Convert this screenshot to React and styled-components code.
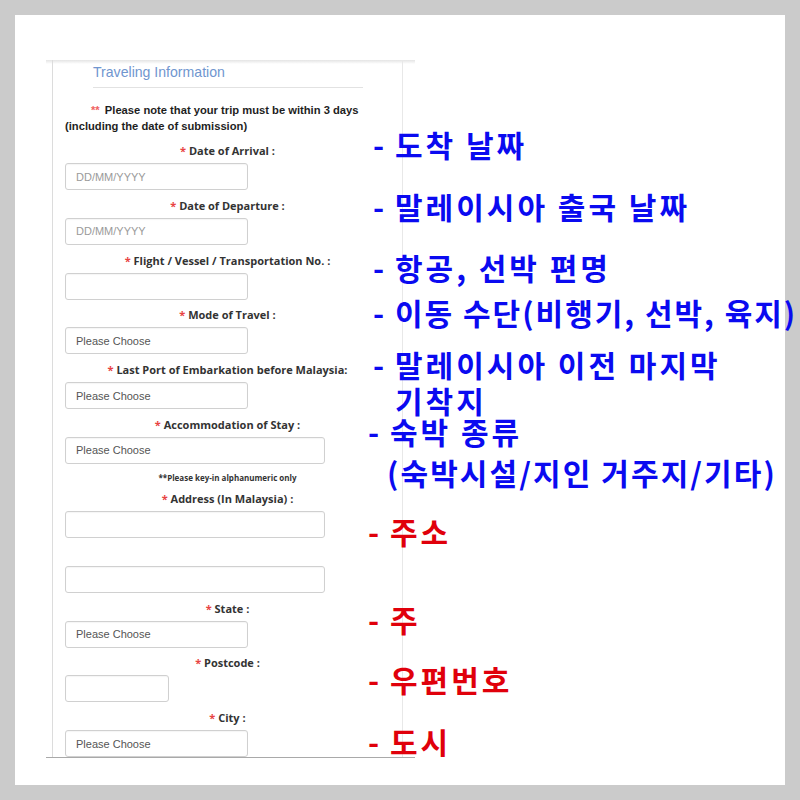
import React from "react";
import styled, { createGlobalStyle } from "styled-components";

const Global = createGlobalStyle`
  html, body { margin: 0; padding: 0; background: #cbcbcb; }
  body { width: 800px; height: 800px; overflow: hidden; }
  * { box-sizing: border-box; }
`;

const Frame = styled.div`
  margin: 15px;
  width: 770px;
  height: 770px;
  background: #fff;
  display: flex;
  align-items: flex-start;
`;

/* captured form */
const Shot = styled.div`
  margin: 45px 0 0 31px;
  width: 369px;
  height: 698px;
  flex-shrink: 0;
  overflow: hidden;
  border-bottom: 1px solid #a9a9a9;
  background: linear-gradient(#e4e4e4, #fff 4px);
`;

const Panel = styled.section`
  margin-left: 6px;
  width: 351px;
  min-height: 100%;
  padding-top: 2px;
  border-left: 1px solid #dcdcdc;
  border-right: 1px solid #e8e8e8;
`;

const Heading = styled.h3`
  margin: 0 0 0 40px;
  font: 400 14.1px/20px "Liberation Sans", Arial, sans-serif;
  color: #7096cf;
`;

const Rule = styled.hr`
  margin: 5px 0 0 40px;
  width: 270px;
  border: 0;
  border-top: 1px solid #e2e2e2;
`;

const Notice = styled.p`
  margin: 14px 0 0 12px;
  font: 700 11.2px/16px "Liberation Sans", Arial, sans-serif;
  color: #1e1e1e;
  text-indent: 26px;
`;

const Stars = styled.span`
  color: #f06262;
  margin-right: 2px;
`;

const Group = styled.div`
  margin-top: ${(p) => p.$top || 0}px;
  margin-bottom: 7.8px;
`;

const Label = styled.div`
  font: 700 11px/16px "Open Sans", sans-serif;
  color: #333;
  text-align: center;
  margin-bottom: 4px;
`;

const Req = styled.span`
  color: #e84343;
`;

const Hint = styled.div`
  margin-top: 3px;
  font: 700 8px/12px "Open Sans", sans-serif;
  color: #333;
  text-align: center;
`;

const Box = styled.input`
  display: block;
  margin: ${(p) => p.$top || 0}px 0 0 12px;
  width: ${(p) => p.$w}px;
  height: 27px;
  padding: 0 10px;
  border: 1px solid #d0d0d0;
  border-radius: 3px;
  background: #fff;
  box-shadow: inset 0 1px 1px rgba(0, 0, 0, 0.04);
  font: 400 11px "Liberation Sans", Arial, sans-serif;
  color: #555;
  outline: none;
  &::placeholder { color: #9a9a9a; }
`;

/* Korean callouts */
const Notes = styled.div`
  display: flex;
  flex-direction: column;
  margin-left: -47px;
  padding-top: 110.5px;
`;

const Note = styled.div`
  display: flex;
  margin-top: ${(p) => p.$gap}px;
  margin-left: ${(p) => p.$indent || 0}px;
  font: 700 30px/36px "Noto Sans CJK KR", sans-serif;
  letter-spacing: ${(p) => p.$spacing ?? 3}px;
  color: ${(p) => (p.$tone === "red" ? "#e0000b" : "#0a0af0")};
  white-space: nowrap;
`;

const Dash = styled.span`
  width: 22px;
  flex-shrink: 0;
`;

const Field = ({ label, top, children }) => (
  <Group $top={top}>
    <Label>
      <Req>*</Req> {label}
    </Label>
    {children}
  </Group>
);

const choose = "Please Choose";

export default function App() {
  return (
    <>
      <Global />
      <Frame>
        <Shot>
          <Panel>
            <Heading>Traveling Information</Heading>
            <Rule />
            <Notice>
              <Stars>**</Stars> Please note that your trip must be within 3 days
              <br />
              (including the date of submission)
            </Notice>
            <Field label="Date of Arrival :" top={9}>
              <Box $w={183} placeholder="DD/MM/YYYY" readOnly />
            </Field>
            <Field label="Date of Departure :">
              <Box $w={183} placeholder="DD/MM/YYYY" readOnly />
            </Field>
            <Field label="Flight / Vessel / Transportation No. :">
              <Box $w={183} readOnly />
            </Field>
            <Field label="Mode of Travel :">
              <Box $w={183} value={choose} readOnly />
            </Field>
            <Field label="Last Port of Embarkation before Malaysia:">
              <Box $w={183} value={choose} readOnly />
            </Field>
            <Field label="Accommodation of Stay :">
              <Box $w={260} value={choose} readOnly />
            </Field>
            <Hint>**Please key-in alphanumeric only</Hint>
            <Field label="Address (In Malaysia) :" top={7}>
              <Box $w={260} readOnly />
              <Box $w={260} $top={28} readOnly />
            </Field>
            <Field label="State :">
              <Box $w={183} value={choose} readOnly />
            </Field>
            <Field label="Postcode :">
              <Box $w={104} readOnly />
            </Field>
            <Field label="City :">
              <Box $w={183} value={choose} readOnly />
            </Field>
          </Panel>
        </Shot>

        <Notes>
          <Note $gap={0} $indent={5}>
            <Dash>-</Dash>
            <span>도착 날짜</span>
          </Note>
          <Note $gap={26} $indent={5}>
            <Dash>-</Dash>
            <span>말레이시아 출국 날짜</span>
          </Note>
          <Note $gap={25} $indent={5}>
            <Dash>-</Dash>
            <span>항공, 선박 편명</span>
          </Note>
          <Note $gap={9} $indent={5} $spacing={2}>
            <Dash>-</Dash>
            <span>이동 수단(비행기, 선박, 육지)</span>
          </Note>
          <Note $gap={16} $indent={5}>
            <Dash>-</Dash>
            <span>
              말레이시아 이전 마지막
              <br />
              기착지
            </span>
          </Note>
          <Note $gap={-5}>
            <Dash>-</Dash>
            <span>숙박 종류</span>
          </Note>
          <Note $gap={5} $indent={19} $spacing={2.1}>
            <span>(숙박시설/지인 거주지/기타)</span>
          </Note>
          <Note $gap={23.5} $tone="red">
            <Dash>-</Dash>
            <span>주소</span>
          </Note>
          <Note $gap={51.5} $tone="red">
            <Dash>-</Dash>
            <span>주</span>
          </Note>
          <Note $gap={24} $tone="red">
            <Dash>-</Dash>
            <span>우편번호</span>
          </Note>
          <Note $gap={26.5} $tone="red">
            <Dash>-</Dash>
            <span>도시</span>
          </Note>
        </Notes>
      </Frame>
    </>
  );
}
